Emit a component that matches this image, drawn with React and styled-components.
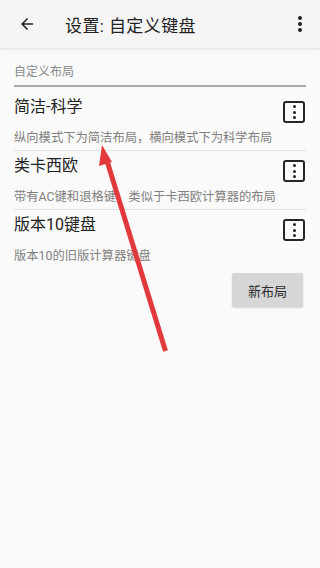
import React from "react";
import styled, { createGlobalStyle } from "styled-components";

const Global = createGlobalStyle`
  html, body { margin: 0; padding: 0; background: #fafafa; }
  body { font-family: Roboto, "Noto Sans CJK SC", sans-serif; }
  * { box-sizing: border-box; }
`;

const Screen = styled.div`
  position: relative;
  width: 320px;
  height: 568px;
  background: #fafafa;
  overflow: hidden;
`;

const AppBar = styled.header`
  height: 48px;
  background: #f5f5f5;
  display: flex;
  align-items: center;
  padding: 0 0 0 15px;
  box-shadow: 0 1px 3px rgba(0,0,0,0.12);
  position: relative;
  z-index: 1;
`;

const IconBtn = styled.div`
  width: ${p => p.$w || 24}px;
  height: 24px;
  display: flex;
  align-items: center;
  justify-content: center;
  color: #222;
`;

const Title = styled.h1`
  flex: 1;
  margin: 0 0 0 26px;
  font-size: 17px;
  font-weight: 400;
  color: #222;
  font-family: Roboto, "Noto Sans CJK SC", sans-serif;
  letter-spacing: 0.4px;
`;

const Content = styled.main`
  padding: 15px 14px 0 14px;
`;

const SectionLabel = styled.div`
  font-size: 12px;
  color: #8a8a8a;
  line-height: 18px;
  padding-bottom: 4px;
  border-bottom: 2px solid #a8a8a8;
  font-family: Roboto, "Noto Sans CJK SC", sans-serif;
`;

const Item = styled.div`
  display: flex;
  align-items: flex-start;
  padding: ${p => (p.$first ? 8 : 3)}px 0 3px 0;
  border-bottom: ${p => (p.$last ? "none" : "1px solid #e2e2e2")};
`;

const ItemText = styled.div`
  flex: 1;
  min-width: 0;
`;

const ItemTitle = styled.div`
  font-size: 16px;
  line-height: 24px;
  color: #212121;
  font-family: Roboto, "Noto Sans CJK SC", sans-serif;
`;

const ItemSub = styled.div`
  margin-top: 10px;
  font-size: 12.3px;
  line-height: 18px;
  color: #808080;
  white-space: nowrap;
  font-family: Roboto, "Noto Sans CJK SC", sans-serif;
`;

const MenuBox = styled.div`
  width: 22px;
  height: 22px;
  margin: 6px 1px 0 8px;
  border: 2px solid #262626;
  border-radius: 3px;
  display: flex;
  flex-direction: column;
  align-items: center;
  justify-content: center;
  gap: 2.5px;
`;

const Dot = styled.span`
  width: 3px;
  height: 3px;
  border-radius: 50%;
  background: #222;
`;

const Footer = styled.div`
  display: flex;
  justify-content: flex-end;
  padding: 5px 3px 0 0;
`;

const NewButton = styled.button`
  width: 71px;
  height: 34px;
  border: none;
  border-radius: 2px;
  background: #d6d6d6;
  box-shadow: 0 1px 2px rgba(0,0,0,0.15);
  font-size: 13px;
  color: #2a2a2a;
  font-family: Roboto, "Noto Sans CJK SC", sans-serif;
  padding: 0;
`;

const Overlay = styled.svg`
  position: absolute;
  left: 0;
  top: 0;
  pointer-events: none;
  z-index: 2;
`;

const items = [
  { t: "简洁-科学", s: "纵向模式下为简洁布局，横向模式下为科学布局" },
  { t: "类卡西欧", s: "带有AC键和退格键，类似于卡西欧计算器的布局" },
  { t: "版本10键盘", s: "版本10的旧版计算器键盘" },
];

const Menu = () => (
  <MenuBox>
    <Dot />
    <Dot />
    <Dot />
  </MenuBox>
);

export default function App() {
  return (
    <>
      <Global />
      <Screen>
        <AppBar>
          <IconBtn>
            <svg width="18" height="18" viewBox="0 0 24 24">
              <path d="M20 11H7.83l5.59-5.59L12 4l-8 8 8 8 1.41-1.41L7.83 13H20v-2z" fill="#222" />
            </svg>
          </IconBtn>
          <Title>设置: 自定义键盘</Title>
          <IconBtn $w={40}>
            <svg width="24" height="24" viewBox="0 0 24 24">
              <circle cx="12" cy="6" r="2" fill="#222" />
              <circle cx="12" cy="12" r="2" fill="#222" />
              <circle cx="12" cy="18" r="2" fill="#222" />
            </svg>
          </IconBtn>
        </AppBar>
        <Content>
          <SectionLabel>自定义布局</SectionLabel>
          {items.map((it, i) => (
            <Item key={i} $first={i === 0} $last={i === items.length - 1}>
              <ItemText>
                <ItemTitle>{it.t}</ItemTitle>
                <ItemSub>{it.s}</ItemSub>
              </ItemText>
              <Menu />
            </Item>
          ))}
          <Footer>
            <NewButton>新布局</NewButton>
          </Footer>
        </Content>
        <Overlay width="320" height="568" viewBox="0 0 320 568">
          <line x1="165.5" y1="351" x2="105.5" y2="156" stroke="#e2393d" strokeWidth="5" />
          <polygon points="102,145 112,162 99,166" fill="#e2393d" />
        </Overlay>
      </Screen>
    </>
  );
}
